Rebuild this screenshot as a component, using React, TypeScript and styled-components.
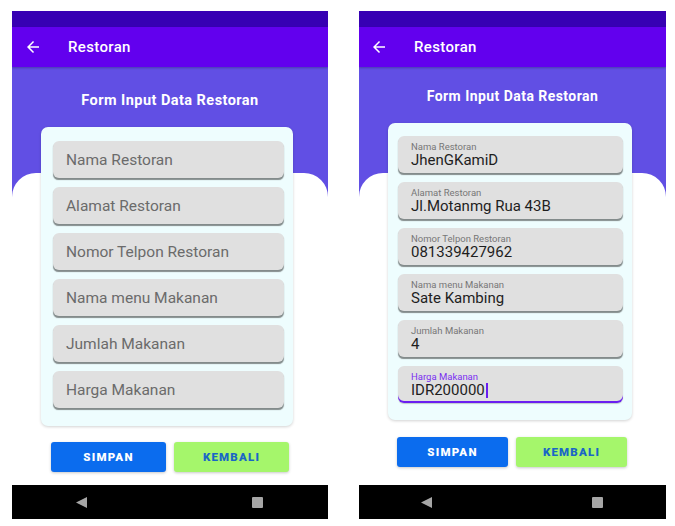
import React from "react";
import styled, { createGlobalStyle } from "styled-components";

const Global = createGlobalStyle`
  html, body { margin: 0; padding: 0; background: #ffffff; }
  body { font-family: Roboto, "Noto Sans", Arial, sans-serif; }
  * { box-sizing: border-box; }
`;

const Screen = styled.div`
  display: flex;
  align-items: flex-start;
  gap: 31px;
  padding: 11px 0 0 12px;
`;

const Phone = styled.div<{ $w: number }>`
  width: ${(p) => p.$w}px;
  height: 508px;
  display: flex;
  flex-direction: column;
  overflow: hidden;
`;

const StatusBar = styled.div`
  height: 16px;
  background: #3700b3;
  flex-shrink: 0;
`;

const AppBar = styled.div<{ $pl: number }>`
  height: 40px;
  flex-shrink: 0;
  background: #6200ee;
  display: flex;
  align-items: center;
  gap: 26px;
  padding-left: ${(p) => p.$pl}px;
  color: #fff;
  position: relative;
  z-index: 2;
  box-shadow: 0 1px 2px rgba(0, 0, 0, 0.25);
`;

const AppTitle = styled.span`
  font-size: 15px;
  font-weight: 500;
  letter-spacing: 0.35px;
`;

const Body = styled.div`
  flex: 1;
  display: grid;
  grid-template: 1fr / 1fr;
`;

const Backdrop = styled.div`
  grid-area: 1 / 1;
  display: flex;
  flex-direction: column;
  background: #614fe4;
`;

const HeaderFill = styled.div`
  height: 106px;
  flex-shrink: 0;
`;

const Sheet = styled.div`
  flex: 1;
  background: #ffffff;
  border-radius: 24px 24px 0 0;
`;

const Content = styled.div<{ $pt: number }>`
  grid-area: 1 / 1;
  display: flex;
  flex-direction: column;
  padding-top: ${(p) => p.$pt}px;
`;

const Title = styled.h1<{ $fs: number }>`
  margin: 0;
  text-align: center;
  color: #fff;
  font-size: ${(p) => p.$fs}px;
  line-height: 17px;
  font-weight: 700;
  letter-spacing: 0.45px;
`;

const Card = styled.div<{ $w: number; $pl: number; $pt: number; $pb: number }>`
  margin: 18px 0 0 29px;
  width: ${(p) => p.$w}px;
  padding: ${(p) => `${p.$pt}px 9px ${p.$pb}px ${p.$pl}px`};
  background: #eefdfe;
  border-radius: 7px;
  box-shadow: 0 1px 3px rgba(0, 0, 0, 0.18);
  display: flex;
  flex-direction: column;
  gap: 9px;
`;

const Field = styled.div<{ $focused?: boolean }>`
  height: 37px;
  background: #e0e0e0;
  border-radius: 6px;
  padding: 0 13px;
  display: flex;
  flex-direction: column;
  justify-content: center;
  box-shadow: ${(p) =>
    p.$focused
      ? "inset 0 -2px 0 #6a1ef0, 0 1px 1px rgba(0,0,0,0.2)"
      : "0 2px 1px -0.5px rgba(0, 0, 0, 0.45)"};
`;

const FilledField = styled(Field)`
  justify-content: flex-start;
  padding-top: 5px;
`;

const Placeholder = styled.span`
  font-size: 15.5px;
  color: #6b6b6b;
  line-height: 18px;
`;

const Label = styled.span<{ $focused?: boolean }>`
  font-size: 9.5px;
  line-height: 11px;
  color: ${(p) => (p.$focused ? "#7a2ff0" : "#777777")};
`;

const Value = styled.span`
  font-size: 15px;
  line-height: 17.5px;
  color: #1e1e1e;
  display: flex;
  align-items: center;
`;

const Caret = styled.span`
  display: inline-block;
  width: 2px;
  height: 15px;
  background: #6a1ef0;
  margin-left: 1px;
`;

const Buttons = styled.div<{ $ml: number; $mt: number }>`
  display: flex;
  gap: 8px;
  margin: ${(p) => `${p.$mt}px 0 0 ${p.$ml}px`};
`;

const Button = styled.button<{ $w: number; $variant: "primary" | "secondary" }>`
  width: ${(p) => p.$w}px;
  height: 30px;
  border: none;
  border-radius: 3px;
  font-family: Roboto, Arial, sans-serif;
  font-size: 11.5px;
  font-weight: 900;
  letter-spacing: 1.2px;
  background: ${(p) => (p.$variant === "primary" ? "#0b6cee" : "#a5f66b")};
  color: ${(p) => (p.$variant === "primary" ? "#ffffff" : "#1a66c6")};
  box-shadow: 0 1px 3px rgba(0, 0, 0, 0.22);
  padding: 0;
`;

const NavBar = styled.div<{ $pl: number; $gap: number }>`
  margin-top: auto;
  height: 34px;
  flex-shrink: 0;
  background: #000;
  display: flex;
  align-items: center;
  padding-left: ${(p) => p.$pl}px;
  gap: ${(p) => p.$gap}px;
`;

const RecentSquare = styled.div`
  width: 11px;
  height: 11px;
  background: #a6a6a6;
  border-radius: 1px;
`;

const BackArrow = () => (
  <svg width="18" height="18" viewBox="0 0 24 24" fill="#fff">
    <path d="M20 11H7.83l5.59-5.59L12 4l-8 8 8 8 1.41-1.41L7.83 13H20v-2z" />
  </svg>
);

const NavBack = () => (
  <svg width="11" height="11" viewBox="0 0 11 11">
    <polygon points="11,0 11,11 0,5.5" fill="#a6a6a6" />
  </svg>
);

const labels = [
  "Nama Restoran",
  "Alamat Restoran",
  "Nomor Telpon Restoran",
  "Nama menu Makanan",
  "Jumlah Makanan",
  "Harga Makanan",
];

const values = [
  "JhenGKamiD",
  "Jl.Motanmg Rua 43B",
  "081339427962",
  "Sate Kambing",
  "4",
  "IDR200000",
];

type Cfg = {
  w: number;
  barPl: number;
  contentPt: number;
  titleFs: number;
  cardW: number;
  cardPl: number;
  cardPt: number;
  cardPb: number;
  btnMl: number;
  btnMt: number;
  btnW: number;
  navPl: number;
  navGap: number;
  filled: boolean;
};

const PhoneScreen = ({ c }: { c: Cfg }) => (
  <Phone $w={c.w}>
    <StatusBar />
    <AppBar $pl={c.barPl}>
      <BackArrow />
      <AppTitle>Restoran</AppTitle>
    </AppBar>
    <Body>
      <Backdrop>
        <HeaderFill />
        <Sheet />
      </Backdrop>
      <Content $pt={c.contentPt}>
        <Title $fs={c.titleFs}>Form Input Data Restoran</Title>
        <Card $w={c.cardW} $pl={c.cardPl} $pt={c.cardPt} $pb={c.cardPb}>
          {labels.map((l, i) =>
            c.filled ? (
              <FilledField key={l} $focused={i === 5}>
                <Label $focused={i === 5}>{l}</Label>
                <Value>
                  {values[i]}
                  {i === 5 && <Caret />}
                </Value>
              </FilledField>
            ) : (
              <Field key={l}>
                <Placeholder>{l}</Placeholder>
              </Field>
            )
          )}
        </Card>
        <Buttons $ml={c.btnMl} $mt={c.btnMt}>
          <Button $w={c.btnW} $variant="primary">SIMPAN</Button>
          <Button $w={c.btnW} $variant="secondary">KEMBALI</Button>
        </Buttons>
      </Content>
    </Body>
    <NavBar $pl={c.navPl} $gap={c.navGap}>
      <NavBack />
      <RecentSquare />
    </NavBar>
  </Phone>
);

const left: Cfg = {
  w: 316,
  barPl: 12,
  contentPt: 25,
  titleFs: 14.5,
  cardW: 252,
  cardPl: 12,
  cardPt: 14,
  cardPb: 18,
  btnMl: 39,
  btnMt: 16,
  btnW: 115,
  navPl: 64,
  navGap: 165,
  filled: false,
};

const right: Cfg = {
  w: 307,
  barPl: 11,
  contentPt: 21,
  titleFs: 14,
  cardW: 244,
  cardPl: 10,
  cardPt: 13,
  cardPb: 17,
  btnMl: 38,
  btnMt: 17,
  btnW: 111,
  navPl: 62,
  navGap: 160,
  filled: true,
};

export default function App() {
  return (
    <>
      <Global />
      <Screen>
        <PhoneScreen c={left} />
        <PhoneScreen c={right} />
      </Screen>
    </>
  );
}
